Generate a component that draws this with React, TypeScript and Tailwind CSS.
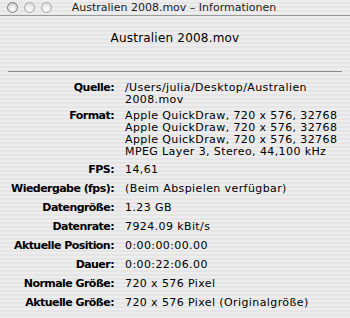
const font = { fontFamily: '"DejaVu Sans", "Liberation Sans", sans-serif' };

const rows: { label: string; lines: string[]; gap: string }[] = [
  { label: 'Quelle:', lines: ['/Users/julia/Desktop/Australien', '2008.mov'], gap: 'pb-[4px]' },
  {
    label: 'Format:',
    lines: [
      'Apple QuickDraw, 720 x 576, 32768',
      'Apple QuickDraw, 720 x 576, 32768',
      'Apple QuickDraw, 720 x 576, 32768',
      'MPEG Layer 3, Stereo, 44,100 kHz',
    ],
    gap: 'pb-[6px]',
  },
  { label: 'FPS:', lines: ['14,61'], gap: 'pb-[7px]' },
  { label: 'Wiedergabe (fps):', lines: ['(Beim Abspielen verfügbar)'], gap: 'pb-[7px]' },
  { label: 'Datengröße:', lines: ['1.23 GB'], gap: 'pb-[7px]' },
  { label: 'Datenrate:', lines: ['7924.09 kBit/s'], gap: 'pb-[7px]' },
  { label: 'Aktuelle Position:', lines: ['0:00:00:00.00'], gap: 'pb-[7px]' },
  { label: 'Dauer:', lines: ['0:00:22:06.00'], gap: 'pb-[7px]' },
  { label: 'Normale Größe:', lines: ['720 x 576 Pixel'], gap: 'pb-[7px]' },
  { label: 'Aktuelle Größe:', lines: ['720 x 576 Pixel (Originalgröße)'], gap: 'pb-[7px]' },
];

export default function App() {
  return (
    <div
      className="w-[350px] h-[318px] overflow-hidden text-black bg-[repeating-linear-gradient(180deg,#ededed_0px,#ededed_2px,#e5e5e5_2px,#e5e5e5_4px)]"
      style={font}
    >
      {/* Title bar */}
      <div className="relative h-[16px] border-b border-[#9a9a9a] flex items-center justify-center">
        <div className="absolute left-[7px] top-[2px] flex gap-[6px]">
          <span className="w-[11px] h-[11px] rounded-full border border-[#7a7a7a] bg-[radial-gradient(circle_at_50%_70%,#ffffff,#c8c8c8)]" />
          <span className="w-[11px] h-[11px] rounded-full border border-[#a8a8a8] bg-[radial-gradient(circle_at_50%_70%,#ffffff,#d4d4d4)]" />
          <span className="w-[11px] h-[11px] rounded-full border border-[#a8a8a8] bg-[radial-gradient(circle_at_50%_70%,#ffffff,#d4d4d4)]" />
        </div>
        <span className="text-[11px] leading-[15px] text-[#222] ml-[-2px]">Australien 2008.mov – Informationen</span>
      </div>

      {/* Header */}
      <div className="h-[55px] flex items-center justify-center">
        <h1 className="text-[12px] leading-[16px] tracking-[0.2px] mt-[-12px]">Australien 2008.mov</h1>
      </div>
      <div className="mx-[8px] h-px bg-[#8a8a8a]" />

      {/* Details */}
      <div className="pt-[10px] grid grid-cols-[114px_1fr] gap-x-[11px] text-[11px] leading-[12px]">
        {rows.map((r) => (
          <div key={r.label} className="contents">
            <div className={`text-right font-bold tracking-[-0.55px] ${r.gap}`}>{r.label}</div>
            <div className={`tracking-[0.4px] ${r.gap}`}>
              {r.lines.map((l, i) => (
                <div key={i} className="whitespace-nowrap">{l}</div>
              ))}
            </div>
          </div>
        ))}
      </div>
    </div>
  );
}
